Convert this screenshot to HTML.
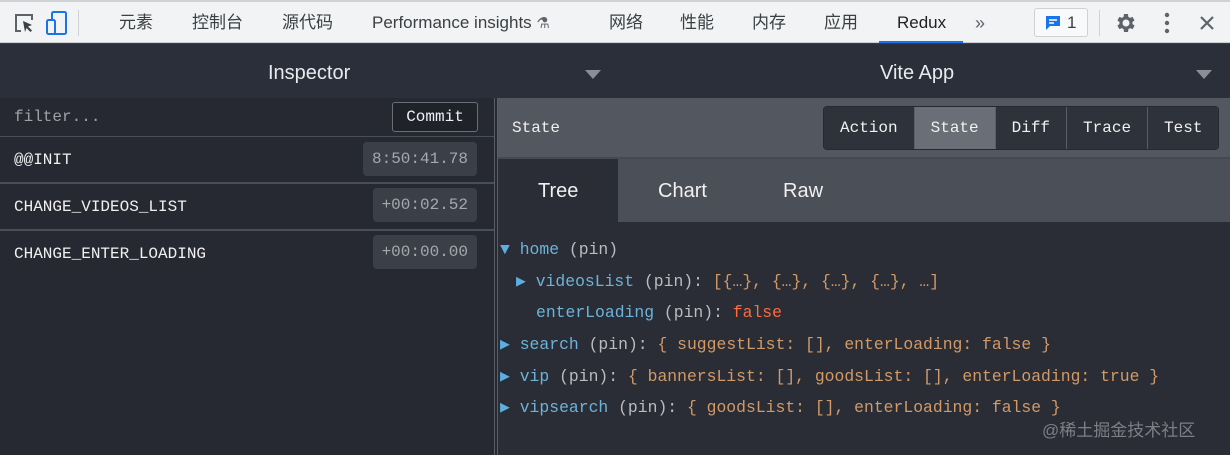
<!DOCTYPE html>
<html><head><meta charset="utf-8"><style>
*{margin:0;padding:0;box-sizing:border-box}
body{width:1230px;height:455px;overflow:hidden;background:#272a33;font-family:"Liberation Sans","Noto Sans CJK SC",sans-serif;position:relative}
.abs{position:absolute}
.top{left:0;top:0;width:1230px;height:43px;background:#f1f3f4;border-top:2px solid #cfd1d4;border-bottom:1px solid #cbcdd1}
.tb{position:absolute;top:10px;font-size:17px;line-height:22px;height:22px;color:#3c4043;white-space:nowrap}
.hdr{left:0;top:43px;width:1230px;height:55px;background:#2b2f39;border-top:1px solid #3a3e47}
.hdr span{position:absolute;top:18px;font-size:20px;color:#e8eaed}
.tri{position:absolute;top:26px;width:0;height:0;border-left:8px solid transparent;border-right:8px solid transparent;border-top:9px solid #8a8e96}
.mono{font-family:"Liberation Mono","DejaVu Sans Mono",monospace}
.left{left:0;top:98px;width:494px;height:357px;background:#262931}
.row{position:absolute;left:0;width:494px;border-bottom:2px solid #4a4e57;font-size:16px;color:#f0f0f0}
.time{position:absolute;right:17px;height:34px;line-height:34px;padding:0 9px;background:#3b3f48;border-radius:4px;color:#a5a8ad;font-size:16px}
.div{left:494px;top:98px;width:4px;height:357px;border-left:1px solid #5a5e66;border-right:1px solid #5a5e66;background:#262931}
.state{left:498px;top:98px;width:732px;height:61px;background:#53575f;border-bottom:2px solid #454951}
.btns{position:absolute;left:325px;top:8px;height:44px;display:flex;border:1px solid #262931;border-radius:4px;overflow:hidden}
.btns div{height:42px;line-height:42px;padding:0 16px;background:#2e323b;color:#f0f0f0;font-size:16px;border-left:1px solid #5a5e66}
.btns div:first-child{border-left:none}
.tabs{left:498px;top:159px;width:732px;height:63px;background:#4b4f57}
.tabs span{position:absolute;top:21px;font-size:20px;color:#f0f0f0}
.tree{left:498px;top:222px;width:732px;height:233px;background:#2a2d36;font-size:16.4px;color:#d19a66}
.ln{position:absolute;white-space:pre}
.k{color:#6cb3d9}.p{color:#b9bcc0}.r{color:#ff6b3d}
.ar{color:#5aaee0}
</style></head><body>
<div class="abs top">
  <svg class="abs" style="left:12px;top:9px" width="24" height="24" viewBox="0 0 24 24"><path d="M9 20H4V4h16v5" fill="none" stroke="#5f6368" stroke-width="2"/><path d="M11 10l9 4-4 1.5 4 4-1.5 1.5-4-4L13 21z" fill="#3c4043"/></svg>
  <svg class="abs" style="left:44px;top:8px" width="26" height="26" viewBox="0 0 26 26"><rect x="8" y="2" width="14" height="22" rx="1.5" fill="none" stroke="#1a73e8" stroke-width="2"/><rect x="3" y="10" width="8" height="14" rx="1.5" fill="#f1f3f4" stroke="#1a73e8" stroke-width="2"/></svg>
  <div class="abs" style="left:78px;top:8px;width:1px;height:26px;background:#cfd1d4"></div>
  <span class="tb" style="left:119px">元素</span>
  <span class="tb" style="left:192px">控制台</span>
  <span class="tb" style="left:282px">源代码</span>
  <span class="tb" style="left:372px">Performance insights <span style="font-size:15px;color:#5f6368">⚗</span></span>
  <span class="tb" style="left:609px">网络</span>
  <span class="tb" style="left:680px">性能</span>
  <span class="tb" style="left:752px">内存</span>
  <span class="tb" style="left:824px">应用</span>
  <span class="tb" style="left:897px;color:#202124">Redux</span>
  <div class="abs" style="left:879px;top:39px;width:84px;height:3px;background:#1a73e8"></div>
  <span class="tb" style="left:975px;font-size:18px;color:#5f6368">»</span>
  <div class="abs" style="left:1034px;top:6px;width:54px;height:29px;border:1px solid #cfd1d4;border-radius:3px;background:#f8f9fa"></div>
  <svg class="abs" style="left:1044px;top:12px" width="18" height="18" viewBox="0 0 18 18"><path d="M2 2h14v10H6l-4 4z" fill="#1a73e8"/><path d="M5 6h8M5 9h5" stroke="#fff" stroke-width="1.6"/></svg>
  <span class="tb" style="left:1067px">1</span>
  <div class="abs" style="left:1099px;top:8px;width:1px;height:26px;background:#cfd1d4"></div>
  <svg class="abs" style="left:1113px;top:9px" width="24" height="24" viewBox="0 0 24 24"><path fill="#5f6368" d="M19.4 13a7.5 7.5 0 000-2l2.1-1.6-2-3.5-2.5 1a7.6 7.6 0 00-1.7-1L15 3h-4l-.4 2.9a7.6 7.6 0 00-1.7 1l-2.5-1-2 3.5L6.5 11a7.5 7.5 0 000 2l-2.1 1.6 2 3.5 2.5-1a7.6 7.6 0 001.7 1L11 21h4l.4-2.9a7.6 7.6 0 001.7-1l2.5 1 2-3.5zM13 15.5a3.5 3.5 0 110-7 3.5 3.5 0 010 7z"/></svg>
  <svg class="abs" style="left:1160px;top:9px" width="14" height="24" viewBox="0 0 14 24"><circle cx="7" cy="4" r="2.2" fill="#5f6368"/><circle cx="7" cy="12" r="2.2" fill="#5f6368"/><circle cx="7" cy="20" r="2.2" fill="#5f6368"/></svg>
  <svg class="abs" style="left:1199px;top:13px" width="16" height="16" viewBox="0 0 16 16"><path d="M2 2l12 12M14 2L2 14" stroke="#5f6368" stroke-width="2.2"/></svg>
</div>
<div class="abs hdr">
  <span style="left:268px">Inspector</span><div class="tri" style="left:585px"></div>
  <span style="left:880px">Vite App</span><div class="tri" style="left:1196px"></div>
</div>
<div class="abs left mono">
  <div class="row" style="top:0;height:39px;border-bottom-width:1px">
    <span class="abs" style="left:14px;top:10px;color:#9ea1a6">filter...</span>
    <div class="abs" style="left:392px;top:4px;width:86px;height:30px;border:1px solid #6a6e76;border-radius:3px;background:#1f2229;line-height:28px;text-align:center;color:#f0f0f0">Commit</div>
  </div>
  <div class="row" style="top:39px;height:47px"><span class="abs" style="left:14px;top:14px">@@INIT</span><div class="time" style="top:5px">8:50:41.78</div></div>
  <div class="row" style="top:86px;height:47px"><span class="abs" style="left:14px;top:14px">CHANGE_VIDEOS_LIST</span><div class="time" style="top:4px">+00:02.52</div></div>
  <div class="row" style="top:133px;height:47px;border:none"><span class="abs" style="left:14px;top:14px">CHANGE_ENTER_LOADING</span><div class="time" style="top:4px">+00:00.00</div></div>
</div>
<div class="abs div"></div>
<div class="abs state mono">
  <span class="abs" style="left:14px;top:21px;color:#f0f0f0;font-size:16px">State</span>
  <div class="btns"><div>Action</div><div style="background:#6a6e76">State</div><div>Diff</div><div>Trace</div><div>Test</div></div>
</div>
<div class="abs tabs">
  <div class="abs" style="left:0;top:0;width:120px;height:63px;background:#2a2d36"></div>
  <span style="left:40px">Tree</span><span style="left:160px">Chart</span><span style="left:285px">Raw</span>
</div>
<div class="abs tree mono">
  <div class="ln" style="left:2px;top:18px"><span class="ar">▼</span> <span class="k">home</span> <span class="p">(pin)</span></div>
  <div class="ln" style="left:18px;top:49px"><span class="ar">▶</span> <span class="k">videosList</span> <span class="p">(pin):</span> [{…}, {…}, {…}, {…}, …]</div>
  <div class="ln" style="left:38px;top:81px"><span class="k">enterLoading</span> <span class="p">(pin):</span> <span class="r">false</span></div>
  <div class="ln" style="left:2px;top:112px"><span class="ar">▶</span> <span class="k">search</span> <span class="p">(pin):</span> { suggestList: [], enterLoading: false }</div>
  <div class="ln" style="left:2px;top:144px"><span class="ar">▶</span> <span class="k">vip</span> <span class="p">(pin):</span> { bannersList: [], goodsList: [], enterLoading: true }</div>
  <div class="ln" style="left:2px;top:175px"><span class="ar">▶</span> <span class="k">vipsearch</span> <span class="p">(pin):</span> { goodsList: [], enterLoading: false }</div>
  <div class="ln" style="left:544px;top:194px;font-family:'Liberation Sans','Noto Sans CJK SC',sans-serif;font-size:17px;color:#7c7f85">@稀土掘金技术社区</div>
</div>
</body></html>
